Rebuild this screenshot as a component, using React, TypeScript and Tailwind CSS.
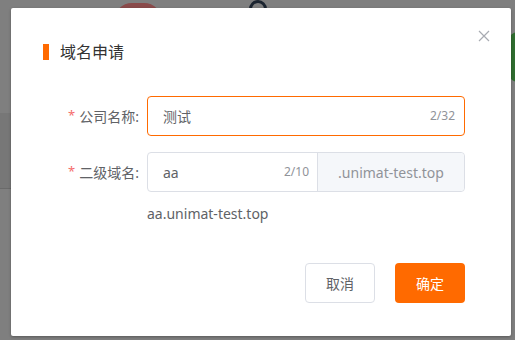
import React from "react";

export default function App() {
  const font = { fontFamily: '"Noto Sans", "Noto Sans CJK SC", sans-serif' };
  return (
    <div
      className="relative w-[515px] h-[340px] overflow-hidden bg-[#7f7f7f]"
      style={font}
    >
      {/* blurred background hints */}
      <div className="absolute left-0 top-[113px] w-[12px] h-[75px] bg-[#777777]" />
      <div className="absolute left-0 top-[188px] w-[12px] h-[1px] bg-[#6a6a6a]" />
      <div className="absolute left-[114px] top-[3px] w-[48px] h-[36px] rounded-full bg-[#8a4a4a]" />
      <div className="absolute left-[249px] top-[0px] w-[18px] h-[18px] rounded-full border-[3px] border-[#1b2430]" />
      <div className="absolute left-[508px] top-[32px] w-[20px] h-[50px] rounded-full bg-[#2f6d2f]" />

      <div className="relative ml-[11px] mt-[8px] w-[500px] h-[328px] bg-white rounded-[2px] shadow-[0_1px_3px_rgba(0,0,0,0.3)] flex flex-col">
        {/* header */}
        <div className="flex items-center pl-[32px] pt-[32px] h-[56px]">
          <div className="w-[6px] h-[16px] bg-[#ff6a00]" />
          <div className="ml-[11px] text-[16px] leading-[24px] text-[#333333]">
            域名申请
          </div>
        </div>
        <button className="absolute left-[467px] top-[22px] w-[12px] h-[12px] flex items-center justify-center">
          <svg width="12" height="12" viewBox="0 0 12 12">
            <path d="M1 1 L11 11 M11 1 L1 11" stroke="#a8abb2" strokeWidth="1.2" fill="none" />
          </svg>
        </button>

        {/* form */}
        <div className="mt-[32px] pl-[32px] flex flex-col gap-[16px]">
          <div className="flex items-center">
            <div className="w-[96px] flex justify-end items-center text-[14px] text-[#606266]">
              <span className="text-[#f56c6c] mr-[4px] text-[13px]">*</span>
              <span>公司名称:</span>
            </div>
            <div className="ml-[8px] w-[318px] h-[40px] border border-[#ff6a00] rounded-[4px] flex items-center pl-[15px] pr-[9px]">
              <span className="flex-1 text-[14px] text-[#606266]">测试</span>
              <span className="text-[12px] text-[#909399]">2/32</span>
            </div>
          </div>
          <div className="flex items-center">
            <div className="w-[96px] flex justify-end items-center text-[14px] text-[#606266]">
              <span className="text-[#f56c6c] mr-[4px] text-[13px]">*</span>
              <span>二级域名:</span>
            </div>
            <div className="ml-[8px] w-[318px] h-[40px] border border-[#dcdfe6] rounded-[4px] flex">
              <div className="w-[170px] h-full flex items-center pl-[15px] pr-[8px] border-r border-[#dcdfe6]">
                <span className="flex-1 text-[14px] text-[#606266]">aa</span>
                <span className="text-[12px] text-[#909399]">2/10</span>
              </div>
              <div className="flex-1 h-full bg-[#f5f7fa] rounded-r-[4px] flex items-center justify-center text-[14px] text-[#909399]">
                .unimat-test.top
              </div>
            </div>
          </div>
          <div className="pl-[104px] -mt-[4px] text-[14px] leading-[20px] text-[#606266]">
            aa.unimat-test.top
          </div>
        </div>

        {/* footer */}
        <div className="mt-[39px] flex justify-end pr-[46px] gap-[20px]">
          <button className="w-[70px] h-[40px] border border-[#dcdfe6] rounded-[4px] bg-white text-[14px] text-[#606266]">
            取消
          </button>
          <button className="w-[70px] h-[40px] rounded-[4px] bg-[#ff6a00] text-[14px] text-white">
            确定
          </button>
        </div>
      </div>
    </div>
  );
}
